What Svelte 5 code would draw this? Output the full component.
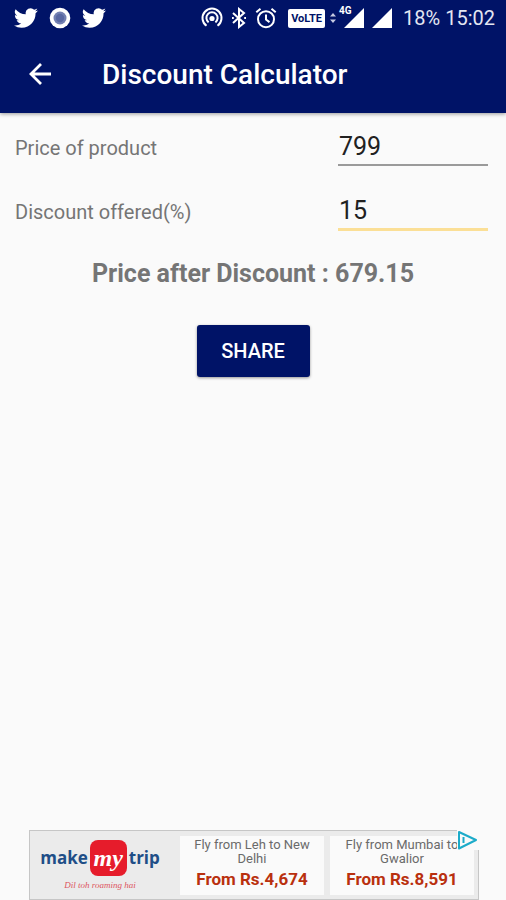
<script>
  let price = $state('799');
  let discount = $state('15');
  let result = $derived((Number(price) * (1 - Number(discount) / 100)).toFixed(2));

  const offers = [
    { route: 'Fly from Leh to New Delhi', fare: 'From Rs.4,674' },
    { route: 'Fly from Mumbai to Gwalior', fare: 'From Rs.8,591' }
  ];
</script>

{#snippet bird()}
  <svg width="24" height="24" viewBox="0 0 24 24" fill="#fff" aria-hidden="true">
    <path d="M23.95 4.57a10 10 0 0 1-2.82.77 4.96 4.96 0 0 0 2.16-2.72c-.95.55-2 .95-3.13 1.18a4.92 4.92 0 0 0-8.38 4.48A13.93 13.93 0 0 1 1.64 3.16a4.92 4.92 0 0 0 1.52 6.57 4.9 4.9 0 0 1-2.23-.61v.06a4.92 4.92 0 0 0 3.95 4.83 5 5 0 0 1-2.21.08 4.94 4.94 0 0 0 4.6 3.42A9.87 9.87 0 0 1 0 19.54a13.99 13.99 0 0 0 7.55 2.21c9.05 0 14-7.5 14-13.98 0-.21 0-.42-.02-.63a9.94 9.94 0 0 0 2.42-2.57z" />
  </svg>
{/snippet}

<div class="screen">
  <header>
    <div class="status">
      <div class="group notices">
        {@render bird()}
        <svg width="22" height="22" viewBox="0 0 22 22" aria-hidden="true">
          <circle cx="11" cy="11" r="10.3" fill="#fff" />
          <circle cx="11" cy="11" r="6.5" fill="#7380b2" />
          <circle cx="11" cy="11" r="4.2" fill="#5968a2" />
        </svg>
        {@render bird()}
      </div>
      <div class="group system">
        <svg width="22" height="22" viewBox="0 0 22 22" fill="none" stroke="#fff" stroke-width="2" aria-hidden="true">
          <path d="M5.5 18.8a9.5 9.5 0 1 1 11 0M7.6 15.4a5.6 5.6 0 1 1 6.8 0" />
          <circle cx="11" cy="11.5" r="2.6" fill="#fff" stroke="none" />
        </svg>
        <svg width="16" height="22" viewBox="0 0 16 22" fill="none" stroke="#fff" stroke-width="2" aria-hidden="true">
          <path d="M2 6l11 10-5 4V2l5 4L2 16" />
          <path d="M1 11h1.8M13.2 11H15" />
        </svg>
        <svg class="alarm" width="22" height="22" viewBox="0 0 22 22" fill="none" stroke="#fff" stroke-width="2" aria-hidden="true">
          <circle cx="11" cy="12.2" r="8" />
          <path d="M11 7.5v5l3.5 2.6M1.3 5.3l4.2-3.6M20.7 5.3l-4.2-3.6" />
        </svg>
        <span class="volte">VoLTE</span>
        <svg class="updown" width="6" height="12" viewBox="0 0 6 12" fill="#c6cbe2" aria-hidden="true">
          <path d="M0 4.5L3 1l3 3.5zM0 7.5h6L3 11z" />
        </svg>
        <span class="cell">
          <span class="net">4G</span>
          <svg width="20" height="20" viewBox="0 0 20 20" fill="#fff" aria-hidden="true"><path d="M20 0v20H0z" /></svg>
        </span>
        <svg width="20" height="20" viewBox="0 0 20 20" fill="#fff" aria-hidden="true"><path d="M20 0v20H0z" /></svg>
        <span class="clock">18% 15:02</span>
      </div>
    </div>
    <div class="toolbar">
      <button class="back" aria-label="Back">
        <svg width="24" height="24" viewBox="0 0 24 24" fill="none" stroke="#fff" stroke-width="2.8" aria-hidden="true">
          <path d="M23 11H3M13 1L3 11l10 10" />
        </svg>
      </button>
      <h1>Discount Calculator</h1>
    </div>
  </header>

  <main>
    <div class="field">
      <label for="price">Price of product</label>
      <input id="price" inputmode="numeric" bind:value={price} />
    </div>
    <div class="field">
      <label for="discount">Discount offered(%)</label>
      <input id="discount" class="active" inputmode="numeric" bind:value={discount} />
    </div>
    <p class="result">Price after Discount : {result}</p>
    <button class="share">SHARE</button>
  </main>

  <aside aria-label="Advertisement">
    <div class="brand">
      <div class="logo">
        <span>make</span>
        <span class="my">my</span>
        <span>trip</span>
      </div>
      <div class="tagline">Dil toh roaming hai</div>
    </div>
    {#each offers as offer}
      <a class="offer" href="#offer">
        <span class="route">{offer.route}</span>
        <strong>{offer.fare}</strong>
      </a>
    {/each}
    <button class="choices" aria-label="Ad choices">
      <svg width="22" height="20" viewBox="0 0 22 20" fill="none" stroke="#1cabc9" stroke-width="2" stroke-linejoin="round" aria-hidden="true">
        <path d="M2 2l17 8L2 18.5zM6.5 7v6" />
      </svg>
    </button>
  </aside>
</div>

<style>
  :global(body) {
    margin: 0;
    background: #fafafa;
  }
  .screen {
    display: flex;
    flex-direction: column;
    min-height: 100vh;
    font-family: Roboto, sans-serif;
    color: #757575;
  }
  svg {
    display: block;
    flex: none;
  }
  button {
    border: 0;
    padding: 0;
    font: inherit;
  }
  header {
    background: #001367;
    color: #fff;
    box-shadow: 0 1px 4px rgba(0, 0, 0, 0.4);
  }
  .status {
    display: flex;
    justify-content: space-between;
    align-items: center;
    height: 36px;
    padding: 0 11px 0 14px;
  }
  .group {
    display: flex;
    align-items: center;
  }
  .notices {
    gap: 11px;
  }
  .system {
    gap: 8px;
  }
  .volte {
    margin-left: 3px;
    width: 37px;
    border-radius: 2px;
    background: #fff;
    color: #001367;
    font-size: 11px;
    line-height: 19px;
    font-weight: 700;
    text-align: center;
  }
  .updown {
    margin-left: -3px;
  }
  .cell {
    position: relative;
  }
  .net {
    position: absolute;
    left: -5px;
    top: -3px;
    font-size: 10px;
    line-height: 12px;
    font-weight: 700;
  }
  .clock {
    margin-left: 3px;
    color: #e3e6f2;
    font-size: 20px;
    line-height: 24px;
    white-space: nowrap;
  }
  .toolbar {
    display: flex;
    align-items: center;
    gap: 38px;
    height: 77px;
    padding: 0 16px;
  }
  .back {
    display: grid;
    place-items: center;
    width: 48px;
    height: 48px;
    background: none;
  }
  h1 {
    margin: 0;
    font-size: 28px;
    line-height: 32px;
    font-weight: 500;
  }
  main {
    flex: 1;
    display: flex;
    flex-direction: column;
    padding: 12px 15px 0;
  }
  .field {
    display: flex;
    justify-content: space-between;
    align-items: flex-start;
    height: 64px;
    padding-right: 3px;
  }
  label {
    font-size: 20px;
    line-height: 46px;
  }
  input {
    box-sizing: border-box;
    width: 150px;
    height: 41px;
    padding: 3px 1px 0;
    border: 0;
    border-bottom: 2px solid #9a9a9a;
    border-radius: 0;
    background: none;
    color: #212121;
    font: 25px/36px Roboto, sans-serif;
    outline: 0;
  }
  input.active {
    height: 42px;
    border-bottom: 3px solid #fbdf96;
  }
  .result {
    margin: 5px 0 0;
    font-size: 25px;
    line-height: 32px;
    font-weight: 700;
    text-align: center;
  }
  .share {
    align-self: center;
    margin-top: 35px;
    width: 113px;
    height: 52px;
    border-radius: 3px;
    background: #001367;
    box-shadow: 0 1px 3px rgba(0, 0, 0, 0.4);
    color: #fff;
    font-size: 20px;
    font-weight: 500;
  }
  aside {
    position: relative;
    display: flex;
    align-self: center;
    gap: 6px;
    box-sizing: border-box;
    width: calc(100% - 56px);
    max-width: 728px;
    height: 70px;
    margin-left: 2px;
    padding: 5px 4px 4px 0;
    border: 1px solid #c6c6c6;
    background: #ebebeb;
  }
  .brand {
    flex: 1;
    display: flex;
    flex-direction: column;
    align-items: center;
    padding: 4px 4px 0 0;
  }
  .logo {
    display: flex;
    align-items: center;
    gap: 2px;
    color: #204e87;
    font: 700 17px/36px "Open Sans", sans-serif;
  }
  .my {
    width: 37px;
    border-radius: 8px;
    background: #e61c2b;
    color: #fff;
    font: italic 700 24px/36px "Liberation Serif", serif;
    text-align: center;
  }
  .tagline {
    margin-top: 4px;
    color: #dd5560;
    font: italic 9px/10px "Liberation Serif", serif;
  }
  .offer {
    display: flex;
    flex-direction: column;
    align-items: center;
    justify-content: space-between;
    box-sizing: border-box;
    width: 144px;
    padding: 2px 12px 5px;
    background: #fafafa;
    color: #6a6a6a;
    text-align: center;
    text-decoration: none;
  }
  .route {
    font-size: 13px;
    line-height: 14px;
  }
  .offer strong {
    color: #b9300e;
    font-size: 17px;
    line-height: 22px;
    white-space: nowrap;
  }
  .choices {
    position: absolute;
    top: -1px;
    right: -1px;
    background: #fafafa;
  }
</style>
